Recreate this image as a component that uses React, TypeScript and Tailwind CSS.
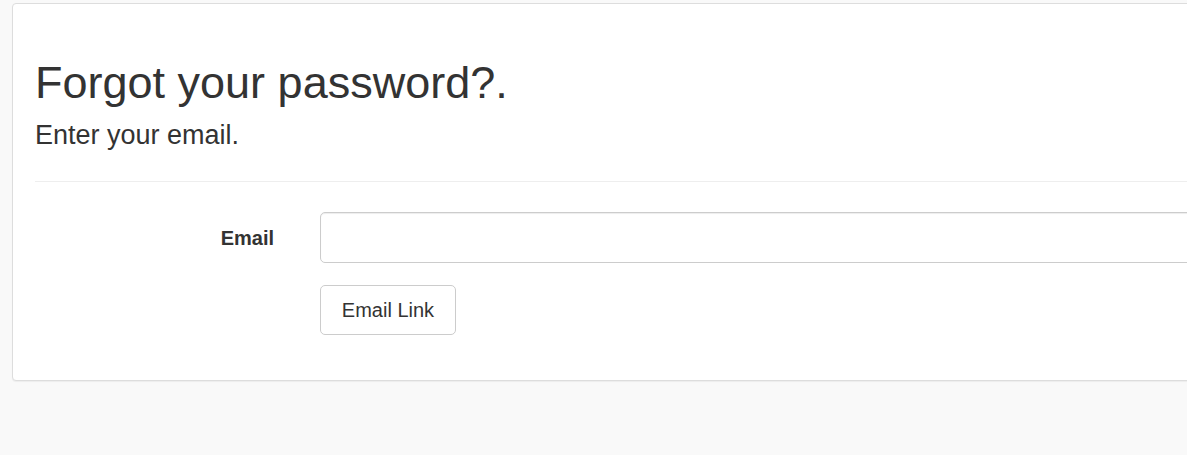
import React from "react";

export default function App() {
  return (
    <div
      className="w-[1187px] h-[455px] overflow-hidden bg-[#f9f9f9] text-[#333]"
      style={{ fontFamily: '"Liberation Sans", Arial, sans-serif' }}
    >
      <div className="ml-[12px] mt-[3px] w-[1400px] h-[378px] bg-white border border-[#dddddd] rounded-[4px] shadow-[0_1px_1px_rgba(0,0,0,0.05)] pl-[22px] pt-[54px]">
        <h1 className="text-[45px] leading-[50px] font-normal m-0">Forgot your password?.</h1>
        <p className="text-[27px] leading-[30px] mt-[12px]">Enter your email.</p>
        <div className="mt-[31px] h-px bg-[#eeeeee]" />
        <div className="mt-[30px] flex items-center">
          <label className="w-[239px] shrink-0 text-right text-[20px] font-bold">Email</label>
          <input
            type="email"
            className="ml-[46px] w-[1100px] shrink-0 h-[51px] border border-[#cccccc] rounded-[5px] px-[17px] text-[20px] outline-none shadow-[inset_0_1px_1px_rgba(0,0,0,0.075)]"
          />
        </div>
        <div className="mt-[22px] ml-[285px]">
          <button className="w-[136px] h-[50px] border border-[#cccccc] rounded-[5px] bg-white text-[20px] text-[#333]">
            Email Link
          </button>
        </div>
      </div>
    </div>
  );
}
